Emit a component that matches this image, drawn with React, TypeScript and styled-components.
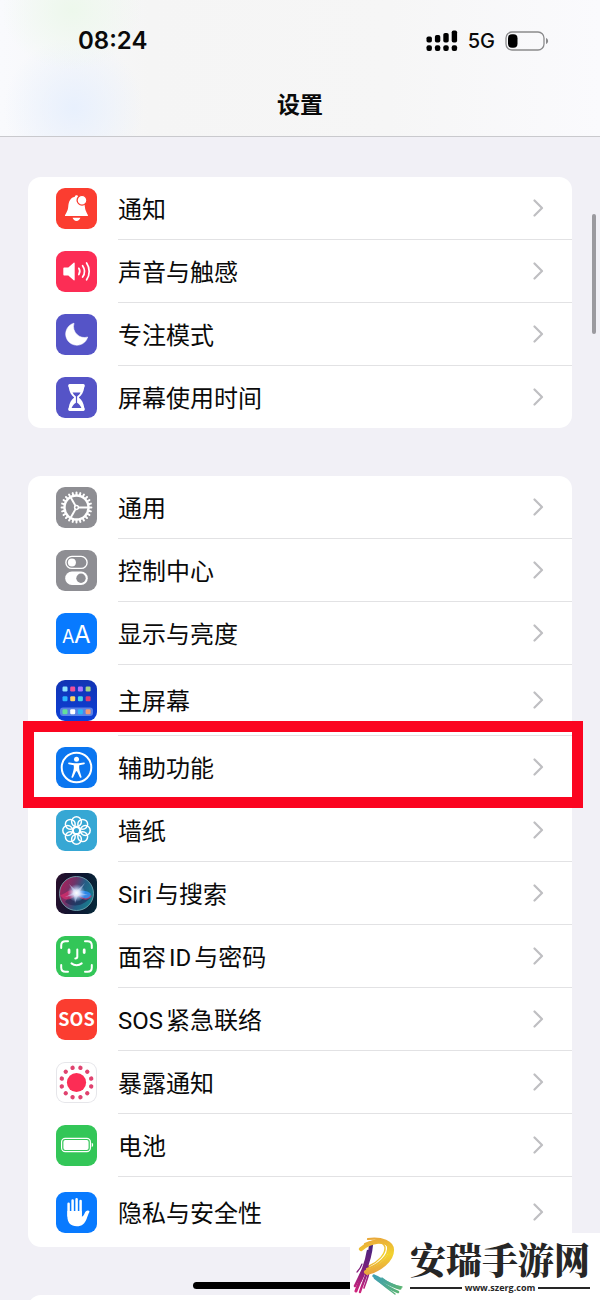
import React from 'react';
import styled, { createGlobalStyle, css } from 'styled-components';

const GlobalStyle = createGlobalStyle`
  *, *::before, *::after {
    box-sizing: border-box;
  }

  body {
    margin: 0;
    background: #f1f0f6;
    color: #0a0a0a;
    font-family: Roboto, 'Noto Sans CJK SC', sans-serif;
  }
`;

const Screen = styled.div`
  position: relative;
  display: flex;
  flex-direction: column;
  height: 100vh;
  overflow: hidden;
`;

const Header = styled.header`
  flex: none;
  border-bottom: 1px solid #c9c9cd;
  background:
    radial-gradient(ellipse 70px 60px at 72px 10px, #edf8ec 0%, rgba(237, 248, 236, 0) 100%),
    radial-gradient(ellipse 70px 70px at 74px 108px, #e8f0fd 0%, rgba(232, 240, 253, 0) 100%),
    linear-gradient(90deg, #f9fafd 0%, #f5f5f5 25%, #f6f6f6 65%, #fafafd 100%);
`;

const StatusBar = styled.div`
  display: flex;
  align-items: center;
  justify-content: space-between;
  height: 82px;
  padding: 0 51px 0 78px;
`;

const Time = styled.time`
  font: 600 24px/30px Inter, sans-serif;
`;

const StatusIcons = styled.div`
  display: flex;
  align-items: center;
  gap: 10px;
  font: 500 20px/24px Inter, sans-serif;
`;

const Title = styled.h1`
  margin: 0;
  height: 54px;
  text-align: center;
  font-size: 23px;
  line-height: 48px;
  font-weight: 700;
`;

const List = styled.main`
  flex: 1;
  overflow-y: auto;
  padding: 40px 28px;
  scrollbar-width: none;
`;

const Group = styled.ul`
  list-style: none;
  margin: 0 0 48px;
  padding: 0;
  min-height: 62px;
  border-radius: 13px;
  background: #fff;
`;

const Row = styled.li<{ $tall?: boolean }>`
  position: relative;
  display: flex;
  height: ${({ $tall }) => ($tall ? 71 : 63)}px;

  &:last-child {
    height: ${({ $tall }) => ($tall ? 70 : 62)}px;
  }
`;

const RowLink = styled.a`
  flex: 1;
  display: flex;
  gap: 21px;
  padding-left: 28px;
  color: inherit;
  text-decoration: none;
`;

const RowBody = styled.span`
  flex: 1;
  display: flex;
  align-items: center;
  justify-content: space-between;
  padding-right: 28px;
  border-bottom: 1px solid #e2e2e4;

  ${Row}:last-child & {
    border-bottom: 0;
  }
`;

const Label = styled.span`
  padding-top: 4px;
  font-size: 24px;
  line-height: 36px;
  text-autospace: normal;
`;

const Highlight = styled.div`
  position: absolute;
  inset: -15px -11px -9px -5px;
  border: 11px solid #fb0520;
  pointer-events: none;
  z-index: 1;
`;

const Tile = styled.svg<{ $bg: string; $outlined?: boolean }>`
  flex: none;
  align-self: center;
  width: 41px;
  height: 41px;
  border-radius: 9px;
  background: ${({ $bg }) => $bg};
  ${({ $outlined }) =>
    $outlined &&
    css`
      box-shadow: inset 0 0 0 1px #e6e6ea;
    `}
`;

const ScrollThumb = styled.div`
  position: absolute;
  top: 214px;
  right: 4px;
  width: 4px;
  height: 120px;
  border-radius: 2px;
  background: #9b9a9f;
`;

const HomeIndicator = styled.div`
  position: absolute;
  bottom: 11px;
  left: 50%;
  width: 214px;
  height: 7px;
  margin-left: -107px;
  border-radius: 4px;
  background: #000;
`;

const Watermark = styled.aside`
  position: absolute;
  right: 0;
  bottom: 0;
  display: flex;
  gap: 6px;
  width: 250px;
  height: 67px;
  padding-right: 10px;
  background: #fff;
  color: #262626;
`;

const WatermarkText = styled.div`
  flex: 1;
  display: flex;
  flex-direction: column;
  padding-top: 3px;
`;

const SiteName = styled.strong`
  font: 900 36px/46px 'Noto Serif CJK SC', 'Noto Sans CJK SC', serif;
  white-space: nowrap;
`;

const SiteUrl = styled.span`
  display: flex;
  align-items: center;
  gap: 3px;
  font: 700 9px/12px 'Open Sans', sans-serif;

  &::before,
  &::after {
    content: '';
    flex: 1;
    height: 2px;
    background: #262626;
  }
`;

const spin = (count: number, offset = 0) =>
  Array.from({ length: count }, (_, i) => offset + (i * 360) / count);

const BellIcon = () => (
  <g fill="#fff">
    <path d="M9 28C8.600 26.500 11.600 24.500 12.200 19c.3-6 2.600-9.500 6.600-10.300.6-1.800 2.800-1.800 3.400 0C26.200 9.500 28.600 13 28.900 19c.6 5.500 3.500 7.500 3.100 9z" />
    <path d="M16.600 29.800h7.800c-.6 2-2 3.200-3.900 3.200s-3.300-1.200-3.900-3.200z" />
    <circle cx="26" cy="12.200" r="4.900" stroke="#fb3d30" strokeWidth="1.300" />
  </g>
);

const SpeakerIcon = () => (
  <g fill="none" stroke="#fff" strokeWidth="1.700" strokeLinecap="round">
    <path
      d="M8.500 16.500h3.800l5.400-4.800c.5-.4 1 0 1 .5v16.600c0 .5-.5.9-1 .5l-5.400-4.800H8.500c-.8 0-1.200-.4-1.200-1.200v-5.600c0-.8.4-1.200 1.200-1.200z"
      fill="#fff"
      stroke="none"
    />
    <path d="M22.800 17.300a5.500 5.500 0 0 1 0 6.200M26.600 14.700a10 10 0 0 1 0 11.400M30.600 12a15 15 0 0 1 0 16.800" />
  </g>
);

const MoonIcon = () => (
  <path
    d="M18 9.200A11.200 11.200 0 1 0 31.700 23C24 25.800 15.200 18 18 9.200z"
    fill="#fff"
    stroke="#fff"
    strokeWidth=".6"
    strokeLinejoin="round"
  />
);

const HourglassIcon = () => (
  <g>
    <path
      d="M13.500 7h14c1.600 0 1.600 2.500.8 3.200C27.500 15 26 18 22.800 20.500 26 23 27.500 26 28.300 30.800c.8.7.8 3.200-.8 3.200h-14c-1.600 0-1.600-2.500-.8-3.200.8-4.800 2.300-7.800 5.500-10.300-3.200-2.500-4.700-5.500-5.500-10.300-.8-.7-.8-3.200.8-3.200z"
      fill="#fff"
    />
    <path d="M16.500 15.500h8c-.8 1.600-2 2.800-3.400 4v6.200c2 1.200 3.500 2.900 4.300 5.300h-9.800c.8-2.400 2.300-4.100 4.300-5.300v-6.200c-1.400-1.200-2.600-2.400-3.400-4z" fill="#5554c7" />
  </g>
);

const GearIcon = () => (
  <g stroke="#fff" fill="none">
    <circle cx="20.500" cy="20.500" r="12" strokeWidth="2.400" />
    {spin(24).map((angle) => (
      <path
        key={angle}
        d="M33 20.500h2.400"
        strokeWidth="2"
        strokeLinecap="round"
        transform={`rotate(${angle} 20.500 20.500)`}
      />
    ))}
    {spin(3).map((angle) => (
      <path key={angle} d="M22 20.500h10" strokeWidth="1.900" transform={`rotate(${angle} 20.500 20.500)`} />
    ))}
    <circle cx="20.500" cy="20.500" r="1.900" strokeWidth="1.500" />
  </g>
);

const ControlIcon = () => (
  <g>
    <rect x="9.900" y="6.400" width="21.200" height="12" rx="6" fill="none" stroke="#fff" strokeWidth="1.400" />
    <circle cx="15.900" cy="12.400" r="4" fill="#fff" />
    <rect x="9.200" y="21.600" width="22.600" height="13.400" rx="6.700" fill="#fff" />
    <circle cx="25" cy="28.300" r="4.700" fill="#8e8e93" />
  </g>
);

const DisplayIcon = () => (
  <g fill="#fff" fontFamily="Inter, sans-serif">
    <text x="6" y="29.500" fontSize="18">A</text>
    <text x="18" y="29.500" fontSize="24">A</text>
  </g>
);

const appRows = [
  ['#8fe3ff', '#f0509a', '#a873ff', '#a2d486'],
  ['#2db4ff', '#ffd166', '#45d4e6', '#e03a72'],
  ['#62e09a', '#ffffff', '#2cb8f5', '#f79a72'],
];

const HomeScreenIcon = () => (
  <g>
    <rect x="4" y="27.500" width="33" height="8.500" rx="3" fill="#7aa0f0" opacity=".7" />
    {appRows.map((colors, row) =>
      colors.map((color, col) => (
        <rect
          key={color}
          x={6.5 + col * 7.7}
          y={[6.5, 16.2, 29.2][row]}
          width="5"
          height="5"
          rx="1.200"
          fill={color}
        />
      )),
    )}
  </g>
);

const AccessibilityIcon = () => (
  <g fill="#fff">
    <circle cx="20.500" cy="20.500" r="14.800" fill="none" stroke="#fff" strokeWidth="2" />
    <circle cx="20.500" cy="12.200" r="2.500" />
    <path d="M13 15.500l5.500.8h4l5.500-.8c1-.1 1.200 1.500.2 1.700l-4.900 1.100c-.4 2.500 0 4.500.7 6.700l1.500 4.700c.3 1.200-1.200 1.600-1.700.5L21 24.300h-1l-2.800 5.900c-.5 1.100-2 .7-1.700-.5l1.500-4.700c.7-2.200 1.100-4.200.7-6.700l-4.900-1.100c-1-.2-.8-1.800.2-1.700z" />
  </g>
);

const WallpaperIcon = () => (
  <g fill="none" stroke="#fff" strokeWidth="1.500">
    {spin(8).map((angle) => (
      <circle key={angle} cx="20.500" cy="11.700" r="4.900" transform={`rotate(${angle} 20.500 20.500)`} />
    ))}
    <circle cx="20.500" cy="20.500" r="3.300" />
  </g>
);

const SiriIcon = () => (
  <g>
    <defs>
      <linearGradient id="siriBall" x1="0" y1=".3" x2="1" y2=".7">
        <stop offset="0" stopColor="#d81f62" />
        <stop offset=".35" stopColor="#8a3a78" />
        <stop offset=".6" stopColor="#2b6f9c" />
        <stop offset="1" stopColor="#15a0a8" />
      </linearGradient>
      <radialGradient id="siriGlow">
        <stop offset="0" stopColor="#fff" />
        <stop offset=".35" stopColor="#e4ecff" stopOpacity=".9" />
        <stop offset="1" stopColor="#9fc8ff" stopOpacity="0" />
      </radialGradient>
    </defs>
    <circle cx="20.500" cy="20.500" r="17" fill="#17233f" />
    <circle cx="20.500" cy="20.500" r="17" fill="url(#siriBall)" opacity=".75" />
    <path d="M9 29c8 6 18 4 25-4-8 1-12-3-14-5-4 1-8 4-11 9z" fill="#1c2450" opacity=".6" />
    <path d="M4 22c7-1 9-9 17-2 5 4 9-1 15 3-5 6-10 4-15-1-7 5-12 7-17 0z" fill="#ec2f70" opacity=".6" />
    <path d="M20 19c6-2 11-2 15 2-2 6-8 6-15-1z" fill="#2e8cf0" opacity=".9" />
    <path d="M13 11l7.500 7L29 10l-6 9.500 9 2.500-10 .5L19 30l-1-8-9 2 9-4.500z" fill="#c9d6f5" opacity=".55" />
    <circle cx="20.500" cy="20" r="9" fill="url(#siriGlow)" />
    <circle cx="20.500" cy="20.500" r="17" fill="none" stroke="#7ab0b8" strokeWidth="1" opacity=".8" />
  </g>
);

const FaceIdIcon = () => (
  <g fill="none" stroke="#fff" strokeWidth="2" strokeLinecap="round">
    {spin(4).map((angle) => (
      <path key={angle} d="M5.200 12V9.500c0-2.800 1.500-4.300 4.300-4.300H12" transform={`rotate(${angle} 20.500 20.500)`} />
    ))}
    <path d="M13 14v2.500M28.200 14v2.500" strokeWidth="2.800" />
    <path d="M21.300 13.500v7.300c0 1.100-.5 1.600-2 1.600" />
    <path d="M15.500 27.400c2.900 2.300 7.300 2.300 10.200 0" />
  </g>
);

const SosIcon = () => (
  <text
    x="20.500"
    y="27"
    textAnchor="middle"
    fill="#fff"
    fontFamily="'Noto Sans CJK SC', sans-serif"
    fontSize="18"
    fontWeight="700"
  >
    SOS
  </text>
);

const ExposureIcon = () => (
  <g fill="#e0426f">
    <circle cx="20.500" cy="20.500" r="9.600" fill="#fc2d55" />
    {spin(12, 15).map((angle) => (
      <circle key={angle} cx="20.500" cy="5.300" r="2.200" transform={`rotate(${angle} 20.500 20.500)`} />
    ))}
  </g>
);

const BatteryIcon = () => (
  <g fill="#fff">
    <rect x="5.600" y="13.300" width="28.800" height="13.400" rx="3.600" fill="none" stroke="#fff" strokeWidth="1.200" />
    <rect x="7.400" y="15.100" width="25.200" height="9.800" rx="2" />
    <path d="M35.700 17.800c1.900.6 1.900 3.800 0 4.400z" />
  </g>
);

const HandIcon = () => (
  <g fill="none" stroke="#fff" strokeLinecap="round" strokeWidth="2.500">
    <path d="M12.600 11.800v12M16.600 8.500v14M20.600 7.200v14M24.600 9v14" />
    <path
      d="M11.350 19h14.500v5.600c1.300-.3 2-1.600 2.800-3.300.9-1.900 2.100-3 4-2.600.9.200 1 .9.600 1.600-.9 1.600-1.500 3.500-2.400 5.900-2 5.400-4.700 8-10.100 8-6 0-9.400-3.600-9.400-10z"
      fill="#fff"
      stroke="none"
    />
  </g>
);

const Chevron = () => (
  <svg width="11" height="18" viewBox="0 0 11 18" fill="none" aria-hidden="true">
    <path d="M1.500 1.500L9 9l-7.500 7.500" stroke="#bfbfc2" strokeWidth="2.200" strokeLinecap="round" strokeLinejoin="round" />
  </svg>
);

const SignalIcon = () => (
  <svg width="32" height="22" viewBox="0 0 32 22" aria-hidden="true">
    {[6, 4.5, 2.5, 0].map((top, i) => (
      <g key={top}>
        <rect x={i * 8.4 + 0.5} y={top + 0.5} width="5.400" height={12 - top} rx="1.800" />
        <rect x={i * 8.4 + 0.5} y="15.200" width="5.400" height="5.800" rx="2" />
      </g>
    ))}
  </svg>
);

const StatusBatteryIcon = () => (
  <svg width="44" height="20" viewBox="0 0 44 20" aria-hidden="true">
    <rect x="1" y="1" width="38" height="18" rx="6" fill="none" stroke="#8a8a8c" strokeWidth="1.300" />
    <rect x="3" y="3.200" width="9.500" height="13.600" rx="4" />
    <path d="M41 7c2.800.8 2.800 5.200 0 6z" fill="#8a8a8c" />
  </svg>
);

const BrushLogo = () => (
  <svg width="54" height="67" viewBox="0 0 54 65" fill="none" strokeLinecap="round" aria-hidden="true">
    <defs>
      <linearGradient id="stem" x1="20" y1="10" x2="8" y2="58" gradientUnits="userSpaceOnUse">
        <stop offset="0" stopColor="#43257f" />
        <stop offset=".5" stopColor="#7a1d7c" />
        <stop offset="1" stopColor="#d0247c" />
      </linearGradient>
      <linearGradient id="bowl" x1="20" y1="5" x2="24" y2="40" gradientUnits="userSpaceOnUse">
        <stop offset="0" stopColor="#e9a93a" />
        <stop offset=".5" stopColor="#f2d32f" />
        <stop offset="1" stopColor="#e8a040" />
      </linearGradient>
      <linearGradient id="leg" x1="24" y1="42" x2="52" y2="58" gradientUnits="userSpaceOnUse">
        <stop offset="0" stopColor="#3f9fb5" />
        <stop offset="1" stopColor="#5cb56c" />
      </linearGradient>
    </defs>
    <g stroke="url(#stem)">
      <path d="M21 11C20 24 16 34 10 46" strokeWidth="4" />
      <path d="M18 17C16 30 12 38 5 52" strokeWidth="2.600" />
      <path d="M17 28C15 38 10 46 6 57" strokeWidth="3" />
      <path d="M18 32C17 42 13 48 10 58" strokeWidth="2.400" />
      <path d="M19 38C18 44 16 48 14 54" strokeWidth="1.600" />
      <path d="M12 30C11 33 9 36 7 38" strokeWidth="1.200" />
    </g>
    <g stroke="url(#bowl)">
      <path d="M11 15C22 6 36 5 40 13C43 24 30 34 16 38" strokeWidth="4.200" />
      <path d="M18 5C32 3 43 8 43 16C43 27 30 37 17 40" strokeWidth="2.200" />
      <path d="M15 10C26 5 35 5 38 12C40 22 28 31 17 35" strokeWidth="2.200" />
      <path d="M22 9C30 7 34 9 35 13C36 20 28 28 19 32" strokeWidth="1.400" />
    </g>
    <g stroke="url(#leg)">
      <path d="M24 42C31 45 39 51 50 54" strokeWidth="3.400" />
      <path d="M25 44C32 49 38 54 48 58" strokeWidth="2.600" />
      <path d="M32 44C38 49 44 52 52 53" strokeWidth="1.300" />
      <path d="M30 48C35 53 40 56 45 60" strokeWidth="1.400" />
    </g>
  </svg>
);

interface SettingItem {
  label: string;
  color: string;
  icon: React.ReactNode;
  tall?: boolean;
  outlined?: boolean;
  highlighted?: boolean;
}

const groups: SettingItem[][] = [
  [
    { label: '通知', color: '#fb3d30', icon: <BellIcon /> },
    { label: '声音与触感', color: '#fc2d55', icon: <SpeakerIcon /> },
    { label: '专注模式', color: '#5554c7', icon: <MoonIcon /> },
    { label: '屏幕使用时间', color: '#5554c7', icon: <HourglassIcon /> },
  ],
  [
    { label: '通用', color: '#8e8e93', icon: <GearIcon /> },
    { label: '控制中心', color: '#8e8e93', icon: <ControlIcon /> },
    { label: '显示与亮度', color: '#087aff', icon: <DisplayIcon /> },
    { label: '主屏幕', color: 'linear-gradient(#1234b4, #0c3fd6)', icon: <HomeScreenIcon />, tall: true },
    { label: '辅助功能', color: '#0b76f0', icon: <AccessibilityIcon />, highlighted: true },
    { label: '墙纸', color: '#36a7d4', icon: <WallpaperIcon /> },
    { label: 'Siri与搜索', color: 'linear-gradient(100deg, #2a0f2c, #0e1430 50%, #062a3a)', icon: <SiriIcon /> },
    { label: '面容ID与密码', color: '#33c658', icon: <FaceIdIcon /> },
    { label: 'SOS紧急联络', color: '#fb3d30', icon: <SosIcon /> },
    { label: '暴露通知', color: '#fff', icon: <ExposureIcon />, outlined: true },
    { label: '电池', color: '#33c658', icon: <BatteryIcon /> },
    { label: '隐私与安全性', color: '#087aff', icon: <HandIcon />, tall: true },
  ],
];

interface SettingRowProps {
  item: SettingItem;
}

const SettingRow: React.FunctionComponent<SettingRowProps> = ({ item }: SettingRowProps) => (
  <Row $tall={item.tall}>
    <RowLink href="#">
      <Tile viewBox="0 0 41 41" $bg={item.color} $outlined={item.outlined} aria-hidden="true">
        {item.icon}
      </Tile>
      <RowBody>
        <Label>{item.label}</Label>
        <Chevron />
      </RowBody>
    </RowLink>
    {item.highlighted && <Highlight />}
  </Row>
);

const App: React.FunctionComponent = () => (
  <Screen>
    <GlobalStyle />
    <Header>
      <StatusBar>
        <Time>08:24</Time>
        <StatusIcons>
          <SignalIcon />
          5G
          <StatusBatteryIcon />
        </StatusIcons>
      </StatusBar>
      <Title>设置</Title>
    </Header>
    <List>
      {groups.map((items) => (
        <Group key={items[0].label}>
          {items.map((item) => (
            <SettingRow key={item.label} item={item} />
          ))}
        </Group>
      ))}
      <Group />
    </List>
    <ScrollThumb />
    <HomeIndicator />
    <Watermark>
      <BrushLogo />
      <WatermarkText>
        <SiteName>安瑞手游网</SiteName>
        <SiteUrl>www.szerg.com</SiteUrl>
      </WatermarkText>
    </Watermark>
  </Screen>
);

export default App;
